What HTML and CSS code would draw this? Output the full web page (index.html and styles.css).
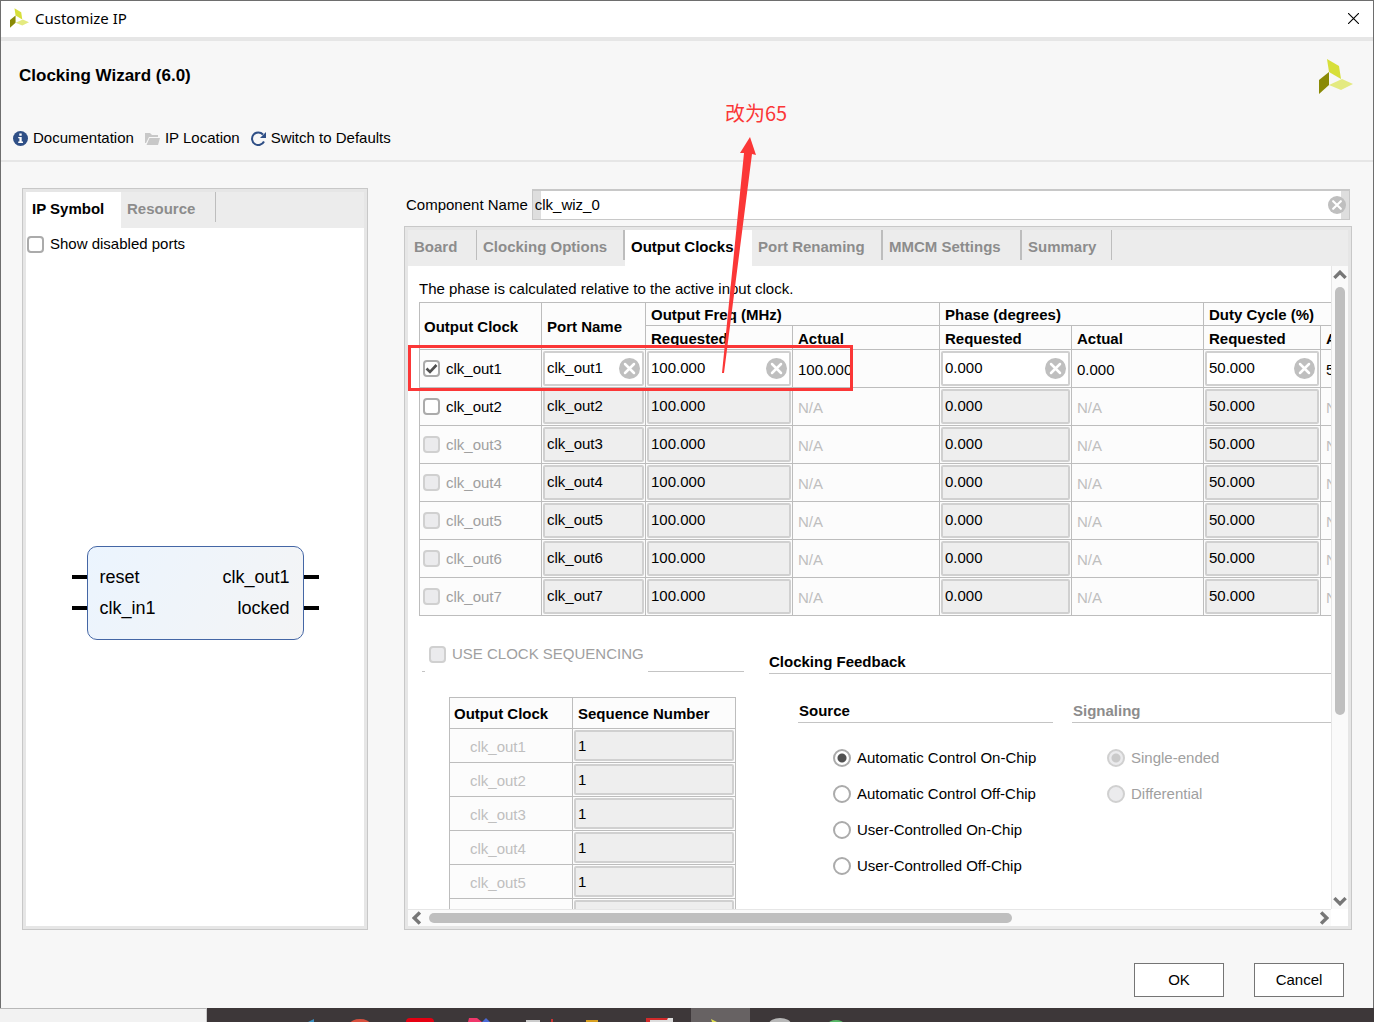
FILE: index.html
```html
<!DOCTYPE html>
<html lang="en">
<head>
<meta charset="utf-8">
<title>Customize IP</title>
<link rel="stylesheet" href="styles.css">
</head>
<body>
<svg class="defs" aria-hidden="true">
  <symbol id="logo" viewBox="0 0 34 35"><path fill="#d7df3a" d="M8 0l12 7 2 13-12-7z"/><path fill="#8a8a06" d="M0 21l10-8v13L0 35z"/><path fill="#e4ea80" d="M10 26l13-6 11 5-12 6z"/></symbol>
  <symbol id="clear" viewBox="0 0 21 21"><circle cx="10.500" cy="10.500" r="10.500" fill="#bfbfbf"/><path d="M6 6l9 9M15 6l-9 9" stroke="#fff" stroke-width="2.500" stroke-linecap="round"/></symbol>
  <symbol id="chevron" viewBox="0 0 12 8"><path d="M1 7l5-5 5 5" fill="none" stroke="#777" stroke-width="3"/></symbol>
</svg>
<div class="dialog">
  <header class="titlebar">
    <svg class="titlebar-logo"><use href="#logo"/></svg>
    <span class="titlebar-text">Customize IP</span>
    <button class="close" aria-label="Close"><svg viewBox="0 0 10 10"><path d="M0 0l10 10M10 0L0 10" stroke="#000"/></svg></button>
  </header>
  <section class="heading">
    <div class="heading-row"><h1>Clocking Wizard (6.0)</h1><svg class="brand"><use href="#logo"/></svg></div>
    <nav class="toolbar">
      <button><svg viewBox="0 0 15 15"><circle cx="7.500" cy="7.500" r="7.500" fill="#2f4f86"/><path fill="#fff" d="M6.300 2.500h2.400v2.200H6.300zM5.200 6h3.500v4.600h1.300V12H5.200v-1.400h1.200V7.300H5.200z"/></svg>Documentation</button>
      <button><svg viewBox="0 0 15 15"><path fill="#c8c8c8" d="M0 2h5l2 2h6v2H4L1 12H0z"/><path fill="#c8c8c8" d="M4.500 7H15l-2 7H1.500z"/></svg>IP Location</button>
      <button><svg viewBox="0 0 15 15"><path fill="none" stroke="#2f4f86" stroke-width="2" d="M13 10.500A6.300 6.300 0 1 1 12 3.500"/><path fill="#2f4f86" d="M15 1v6H9z"/></svg>Switch to Defaults</button>
    </nav>
  </section>
  <main class="body">
    <section class="panel symbol-panel">
      <div class="tabs"><button class="tab active">IP Symbol</button><button class="tab">Resource</button></div>
      <div class="symbol-view">
        <label class="check show-ports"><input type="checkbox">Show disabled ports</label>
        <div class="canvas">
          <div class="pins"><i></i><i></i></div>
          <div class="block"><div>reset<span>clk_out1</span></div><div>clk_in1<span>locked</span></div></div>
          <div class="pins"><i></i><i></i></div>
        </div>
      </div>
    </section>
    <section class="config">
      <div class="name-row">
        <label for="component">Component Name</label>
        <div class="name-field"><input id="component" type="text" value="clk_wiz_0"><button class="clear small" aria-label="Clear component name"><svg><use href="#clear"/></svg></button></div>
      </div>
      <div class="panel config-panel">
        <div class="tabs">
          <button class="tab">Board</button><button class="tab thick">Clocking Options</button><button class="tab active">Output Clocks</button><button class="tab thick">Port Renaming</button><button class="tab thick">MMCM Settings</button><button class="tab">Summary</button>
        </div>
        <div class="scroller">
          <div class="viewport"><div class="content">
            <p>The phase is calculated relative to the active input clock.</p>
            <table class="clocks">
              <colgroup><col class="c-clock"><col class="c-port"><col class="c-freq"><col class="c-freq"><col class="c-phase"><col class="c-phase"><col class="c-duty"><col class="c-duty"></colgroup>
              <thead>
                <tr><th rowspan="2" class="first">Output Clock</th><th rowspan="2">Port Name</th><th colspan="2">Output Freq (MHz)</th><th colspan="2">Phase (degrees)</th><th colspan="2">Duty Cycle (%)</th></tr>
                <tr class="sub"><th>Requested</th><th>Actual</th><th>Requested</th><th>Actual</th><th>Requested</th><th>Actual</th></tr>
              </thead>
              <tbody>
                <tr>
                  <td class="first"><label class="check"><input type="checkbox" checked>clk_out1</label></td>
                  <td><div class="field"><input type="text" aria-label="Port name 1" value="clk_out1"><button class="clear" aria-label="Clear"><svg><use href="#clear"/></svg></button></div></td>
                  <td><div class="field"><input type="text" aria-label="Frequency 1" value="100.000"><button class="clear" aria-label="Clear"><svg><use href="#clear"/></svg></button></div></td>
                  <td class="actual">100.000</td>
                  <td><div class="field"><input type="text" aria-label="Phase 1" value="0.000"><button class="clear" aria-label="Clear"><svg><use href="#clear"/></svg></button></div></td>
                  <td class="actual">0.000</td>
                  <td><div class="field"><input type="text" aria-label="Duty cycle 1" value="50.000"><button class="clear" aria-label="Clear"><svg><use href="#clear"/></svg></button></div></td>
                  <td class="actual">50.0</td>
                </tr>
                <tr class="off">
                  <td class="first"><label class="check"><input type="checkbox">clk_out2</label></td>
                  <td><div class="field"><input type="text" aria-label="Port name 2" value="clk_out2" disabled></div></td>
                  <td><div class="field"><input type="text" aria-label="Frequency 2" value="100.000" disabled></div></td>
                  <td class="actual">N/A</td>
                  <td><div class="field"><input type="text" aria-label="Phase 2" value="0.000" disabled></div></td>
                  <td class="actual">N/A</td>
                  <td><div class="field"><input type="text" aria-label="Duty cycle 2" value="50.000" disabled></div></td>
                  <td class="actual">N/A</td>
                </tr>
                <tr class="off">
                  <td class="first"><label class="check muted"><input type="checkbox" disabled>clk_out3</label></td>
                  <td><div class="field"><input type="text" aria-label="Port name 3" value="clk_out3" disabled></div></td>
                  <td><div class="field"><input type="text" aria-label="Frequency 3" value="100.000" disabled></div></td>
                  <td class="actual">N/A</td>
                  <td><div class="field"><input type="text" aria-label="Phase 3" value="0.000" disabled></div></td>
                  <td class="actual">N/A</td>
                  <td><div class="field"><input type="text" aria-label="Duty cycle 3" value="50.000" disabled></div></td>
                  <td class="actual">N/A</td>
                </tr>
                <tr class="off">
                  <td class="first"><label class="check muted"><input type="checkbox" disabled>clk_out4</label></td>
                  <td><div class="field"><input type="text" aria-label="Port name 4" value="clk_out4" disabled></div></td>
                  <td><div class="field"><input type="text" aria-label="Frequency 4" value="100.000" disabled></div></td>
                  <td class="actual">N/A</td>
                  <td><div class="field"><input type="text" aria-label="Phase 4" value="0.000" disabled></div></td>
                  <td class="actual">N/A</td>
                  <td><div class="field"><input type="text" aria-label="Duty cycle 4" value="50.000" disabled></div></td>
                  <td class="actual">N/A</td>
                </tr>
                <tr class="off">
                  <td class="first"><label class="check muted"><input type="checkbox" disabled>clk_out5</label></td>
                  <td><div class="field"><input type="text" aria-label="Port name 5" value="clk_out5" disabled></div></td>
                  <td><div class="field"><input type="text" aria-label="Frequency 5" value="100.000" disabled></div></td>
                  <td class="actual">N/A</td>
                  <td><div class="field"><input type="text" aria-label="Phase 5" value="0.000" disabled></div></td>
                  <td class="actual">N/A</td>
                  <td><div class="field"><input type="text" aria-label="Duty cycle 5" value="50.000" disabled></div></td>
                  <td class="actual">N/A</td>
                </tr>
                <tr class="off">
                  <td class="first"><label class="check muted"><input type="checkbox" disabled>clk_out6</label></td>
                  <td><div class="field"><input type="text" aria-label="Port name 6" value="clk_out6" disabled></div></td>
                  <td><div class="field"><input type="text" aria-label="Frequency 6" value="100.000" disabled></div></td>
                  <td class="actual">N/A</td>
                  <td><div class="field"><input type="text" aria-label="Phase 6" value="0.000" disabled></div></td>
                  <td class="actual">N/A</td>
                  <td><div class="field"><input type="text" aria-label="Duty cycle 6" value="50.000" disabled></div></td>
                  <td class="actual">N/A</td>
                </tr>
                <tr class="off">
                  <td class="first"><label class="check muted"><input type="checkbox" disabled>clk_out7</label></td>
                  <td><div class="field"><input type="text" aria-label="Port name 7" value="clk_out7" disabled></div></td>
                  <td><div class="field"><input type="text" aria-label="Frequency 7" value="100.000" disabled></div></td>
                  <td class="actual">N/A</td>
                  <td><div class="field"><input type="text" aria-label="Phase 7" value="0.000" disabled></div></td>
                  <td class="actual">N/A</td>
                  <td><div class="field"><input type="text" aria-label="Duty cycle 7" value="50.000" disabled></div></td>
                  <td class="actual">N/A</td>
                </tr>
              </tbody>
            </table>
            <div class="lower">
              <section class="sequencing">
                <div class="legend"><label class="check muted"><input type="checkbox" disabled>USE CLOCK SEQUENCING</label></div>
                <table class="sequence">
                  <colgroup><col class="s-clock"><col class="s-number"></colgroup>
                  <thead><tr><th class="first">Output Clock</th><th>Sequence Number</th></tr></thead>
                  <tbody>
                    <tr class="off"><td class="name">clk_out1</td><td><div class="field"><input type="text" aria-label="Sequence 1" value="1" disabled></div></td></tr>
                    <tr class="off"><td class="name">clk_out2</td><td><div class="field"><input type="text" aria-label="Sequence 2" value="1" disabled></div></td></tr>
                    <tr class="off"><td class="name">clk_out3</td><td><div class="field"><input type="text" aria-label="Sequence 3" value="1" disabled></div></td></tr>
                    <tr class="off"><td class="name">clk_out4</td><td><div class="field"><input type="text" aria-label="Sequence 4" value="1" disabled></div></td></tr>
                    <tr class="off"><td class="name">clk_out5</td><td><div class="field"><input type="text" aria-label="Sequence 5" value="1" disabled></div></td></tr>
                    <tr class="off"><td class="name"></td><td><div class="field"></div></td></tr>
                  </tbody>
                </table>
              </section>
              <section class="feedback">
                <h2>Clocking Feedback</h2>
                <div class="groups">
                  <div class="group">
                    <h2>Source</h2>
                    <div class="radios">
                      <label><input type="radio" name="source" checked>Automatic Control On-Chip</label>
                      <label><input type="radio" name="source">Automatic Control Off-Chip</label>
                      <label><input type="radio" name="source">User-Controlled On-Chip</label>
                      <label><input type="radio" name="source">User-Controlled Off-Chip</label>
                    </div>
                  </div>
                  <div class="group muted">
                    <h2>Signaling</h2>
                    <div class="radios">
                      <label><input type="radio" name="signaling" checked disabled>Single-ended</label>
                      <label><input type="radio" name="signaling" disabled>Differential</label>
                    </div>
                  </div>
                </div>
              </section>
            </div>
          </div></div>
          <div class="bar vertical"><svg><use href="#chevron"/></svg><div class="track"><div class="thumb"></div></div><svg class="flip"><use href="#chevron"/></svg></div>
          <div class="bar horizontal"><svg viewBox="0 0 8 12"><path d="M7 1L2 6l5 5" fill="none" stroke="#777" stroke-width="3"/></svg><div class="track"><div class="thumb"></div></div><svg viewBox="0 0 8 12"><path d="M1 1l5 5-5 5" fill="none" stroke="#777" stroke-width="3"/></svg></div>
        </div>
      </div>
    </section>
  </main>
  <footer class="actions"><button>OK</button><button>Cancel</button></footer>
</div>
<div class="desktop">
  <div class="edge"></div>
  <div class="taskbar">
    <svg width="700" height="14" viewBox="207 0 700 14">
      <rect x="691" width="59" height="14" fill="#676263"/>
      <path fill="#3b8fc0" d="M308 14l6-3v3z"/>
      <ellipse cx="360" cy="16" rx="10" ry="5" fill="#d9503f"/>
      <rect x="406" y="10" width="28" height="8" rx="4" fill="#e60012"/>
      <path fill="#f0386b" d="M468 14l1-4 8 0 5 4z"/><path fill="#4a6ad8" d="M482 14l4-4 4 4z"/>
      <path fill="#ccc" d="M526 12h14v2h-14z"/><path fill="#d8a020" d="M586 12h12v2h-12z"/><path fill="#c33" d="M551 11h2v3h-2z"/>
      <path fill="#d22b2b" d="M646 10h26l-3 4h-23z"/><path fill="#ddd" d="M650 12h17v2h-17zM668 10h5v4h-7z"/>
      <path fill="#e0e050" d="M711 11l6 3h-5z"/>
      <ellipse cx="780" cy="16" rx="11" ry="6" fill="#b8b8b8"/>
      <ellipse cx="836" cy="16" rx="8" ry="4" fill="#58b868"/>
    </svg>
  </div>
</div>
<div class="annotation">
  <div class="note" lang="zh-CN">改为65</div>
  <svg width="1374" height="400"><rect x="409.500" y="346.500" width="442" height="43" fill="none" stroke="#fb3737" stroke-width="3"/><path fill="#fb3737" d="M750 137l6 18-4-1-28 219h-2l22-220h-4z"/></svg>
</div>
</body>
</html>
```
FILE: styles.css
```css
* { box-sizing: border-box; }
body {
  margin: 0;
  height: 100vh;
  display: flex;
  flex-direction: column;
  overflow: hidden;
  font: 15px/18px "Liberation Sans", Arial, sans-serif;
  color: #000;
}
button, input { font: inherit; color: inherit; margin: 0; padding: 0; border: 0; background: none; }
h1, h2, p { margin: 0; }
svg { display: block; flex: none; }
.defs { position: absolute; width: 0; height: 0; }

.dialog {
  flex: 1;
  min-height: 0;
  display: flex;
  flex-direction: column;
  background: #f7f7f7;
  border: 1px solid #6e6e6e;
  border-bottom: 0;
}
.titlebar {
  height: 40px;
  display: flex;
  align-items: center;
  padding: 0 14px 2px 9px;
  gap: 6px;
  background: #fff;
  border-bottom: 4px solid #e6e6e6;
}
.titlebar-logo { width: 19px; height: 20px; }
.titlebar-text { flex: 1; font: 15px/20px "Noto Sans", sans-serif; }
.close svg { width: 11px; height: 11px; }

.heading { height: 121px; border-bottom: 2px solid #e6e6e6; }
.heading-row { display: flex; justify-content: space-between; padding: 18px 20px 0 18px; }
h1 { font-size: 17px; line-height: 34px; }
.brand { width: 34px; height: 35px; }
.toolbar { display: flex; gap: 11px; padding: 35px 12px 0; }
.toolbar button { display: flex; align-items: center; gap: 5px; }
.toolbar svg { width: 15px; height: 15px; }

.body {
  flex: 1;
  min-height: 0;
  display: grid;
  grid-template-columns: 346px 1fr;
  gap: 36px;
  padding: 26px 21px 0;
}
.panel {
  display: flex;
  flex-direction: column;
  min-height: 0;
  border: 1px solid #c8c8c8;
  padding: 3px;
  background: #e6e6e6;
}
.tabs { flex: none; height: 36px; display: grid; align-items: start; background: #ececec; }
.symbol-panel .tabs { grid-template-columns: 95px 95px; }
.config-panel .tabs { grid-template-columns: 69px 148px 127px 131px 139px 90px; }
.tab {
  height: 30px;
  padding: 4px 0 0 6px;
  font-weight: bold;
  text-align: left;
  color: #8c8c8c;
  border-right: 1px solid #bdbdbd;
  white-space: nowrap;
}
.tab.thick { border-right-width: 2px; }
.tab.active { height: 36px; padding-bottom: 6px; color: #000; background: #fff; border: 0; }

.symbol-view { flex: 1; display: flex; flex-direction: column; background: #fff; }
.show-ports { padding: 7px 1px; }
.check { display: flex; align-items: center; gap: 6px; }
.muted { color: #a0a0a0; }
input[type="checkbox"], input[type="radio"] {
  appearance: none;
  flex: none;
  width: 17px;
  height: 17px;
  border: 2px solid #ababab;
  border-radius: 4px;
  background: #fff;
}
input[type="checkbox"]:checked {
  background: #fff url("data:image/svg+xml,%3Csvg xmlns='http://www.w3.org/2000/svg' viewBox='0 0 13 13'%3E%3Cpath d='M1.500 6.500l3.500 3.500 6.500-7' fill='none' stroke='%23505050' stroke-width='2.600'/%3E%3C/svg%3E");
}
input[type="checkbox"]:disabled, input[type="radio"]:disabled { background-color: #ebebed; border-color: #d0d0d0; }

.canvas { flex: 1; display: flex; align-items: center; justify-content: center; }
.pins { width: 15px; }
.pins i { display: block; height: 4px; margin: 13px 0 27px; background: #000; }
.pins i + i { margin: 0 0 15px; }
.block {
  width: 217px;
  padding: 15px 13px 15px 12px;
  border: 1px solid #4466a5;
  border-radius: 10px;
  background: linear-gradient(120deg, #ebf4fe, #f4f4f5);
  font-size: 18px;
  line-height: 31px;
}
.block div { display: flex; justify-content: space-between; }

.config { display: flex; flex-direction: column; min-width: 0; min-height: 0; gap: 6px; }
.name-row { display: flex; align-items: center; gap: 4px; padding: 1px 2px 0; }
.name-field {
  flex: 1;
  height: 31px;
  display: flex;
  align-items: center;
  border: 1px solid #c8c8c8;
  border-width: 2px 1px 1px;
  background: linear-gradient(#fff, #fff) 8px 0 / calc(100% - 16px) 100% no-repeat #dedede;
}
.name-field input { flex: 1; padding-left: 2px; }
.clear { width: 21px; height: 21px; flex: none; margin-right: 2px; }
.clear svg { width: 100%; height: 100%; }
.clear.small { width: 18px; height: 18px; margin-right: 3px; }

.config-panel { flex: 1; }
.scroller {
  flex: 1;
  min-height: 0;
  display: grid;
  grid-template: minmax(0, 1fr) 17px / minmax(0, 1fr) 17px;
  background: #fff;
}
.viewport { overflow: hidden; }
.content { width: max-content; padding: 14px 11px 0; }
.content p { margin-bottom: 4px; }
table { border-collapse: collapse; table-layout: fixed; background: #fcfcfc; }
th, td { border: 1px solid #bdbdbd; padding: 2px 5px 0; text-align: left; }
td { padding: 1px; }
th.first { padding-left: 4px; }
td.first { padding-left: 3px; }
.clocks { width: 1019px; }
.c-clock { width: 122px; }
.c-port { width: 104px; }
.c-freq { width: 147px; }
.c-phase { width: 132px; }
.c-duty { width: 117px; }
.clocks thead tr { height: 23px; }
.clocks thead .sub { height: 24px; }
.clocks tbody tr { height: 38px; }
td.actual { padding: 3px 0 0 5px; }
.off .actual { color: #bfbfbf; }
.field {
  height: 35px;
  display: flex;
  align-items: center;
  border: 2px solid #d0d0d0;
  border-radius: 2px;
  background: #fff;
}
.field input { flex: 1; min-width: 0; width: 100%; padding: 0 0 2px 2px; }
.off .field { background: #eee; }

.lower { display: grid; grid-template-columns: 322px 1fr; gap: 25px; padding: 21px 0 0 3px; }
.legend { display: flex; align-items: flex-end; height: 35px; }
.legend .check { height: 34px; margin-bottom: 1px; padding: 0 4px; }
.legend::before { content: ""; width: 3px; height: 1px; background: #c4c4c4; }
.legend::after { content: ""; flex: 1; height: 1px; background: #c4c4c4; }
.sequence { width: 287px; margin: 25px 0 0 27px; }
.s-clock { width: 123px; }
.s-number { width: 163px; }
.sequence thead tr { height: 31px; }
.sequence tbody tr { height: 34px; }
.sequence .field { height: 31px; }
.sequence .field input { padding-bottom: 0; }
.sequence .name { padding: 3px 0 0 20px; color: #bfbfbf; }
.feedback { padding-top: 16px; }
h2 { font-size: 15px; line-height: 18px; padding-bottom: 2px; border-bottom: 1px solid #c4c4c4; }
.groups { display: grid; grid-template-columns: 255px 1fr; gap: 19px; padding: 28px 0 0 29px; }
.group h2 { padding-left: 1px; }
.group.muted h2 { color: #8c8c8c; }
.radios { padding: 17px 0 0 35px; }
.radios label { display: flex; align-items: center; height: 36px; gap: 6px; }
input[type="radio"] { width: 18px; height: 18px; border-radius: 50%; }
input[type="radio"]:checked { background: radial-gradient(circle, #505050 4px, #fff 5px); }
input[type="radio"]:checked:disabled { background: radial-gradient(circle, #cacaca 4px, #ebebed 5px); }

.bar { display: flex; align-items: center; background: #fafafa; }
.track { flex: 1; }
.thumb { background: #bfbfbf; border-radius: 5px; }
.vertical { flex-direction: column; padding: 4px 0 3px; border-left: 1px solid #e6e6e6; }
.vertical svg { width: 14px; height: 9px; }
.flip { transform: rotate(180deg); }
.vertical .track { padding: 8px 0 7px; }
.vertical .thumb { width: 10px; height: 71%; }
.horizontal { border-top: 1px solid #e6e6e6; padding: 0 2px 0 4px; }
.horizontal svg { width: 9px; height: 14px; }
.horizontal .track { padding: 0 8px; }
.horizontal .thumb { width: 66%; height: 10px; }

.actions { flex: none; display: flex; justify-content: flex-end; gap: 30px; padding: 33px 29px 11px; }
.actions button { width: 90px; height: 34px; background: #fff; border: 1px solid #757575; }

.desktop { flex: none; display: flex; height: 14px; }
.edge { width: 207px; background: #f2f2f2; border-top: 1px solid #b8b8b8; border-right: 1px solid #c8c8c8; }
.taskbar { flex: 1; overflow: hidden; background: #3d3739; }

.annotation { position: absolute; top: 0; left: 0; pointer-events: none; }
.note {
  position: absolute;
  top: 98px;
  left: 725px;
  font: 20px/30px "Noto Sans CJK SC", sans-serif;
  color: #fb3737;
  white-space: nowrap;
}
```
